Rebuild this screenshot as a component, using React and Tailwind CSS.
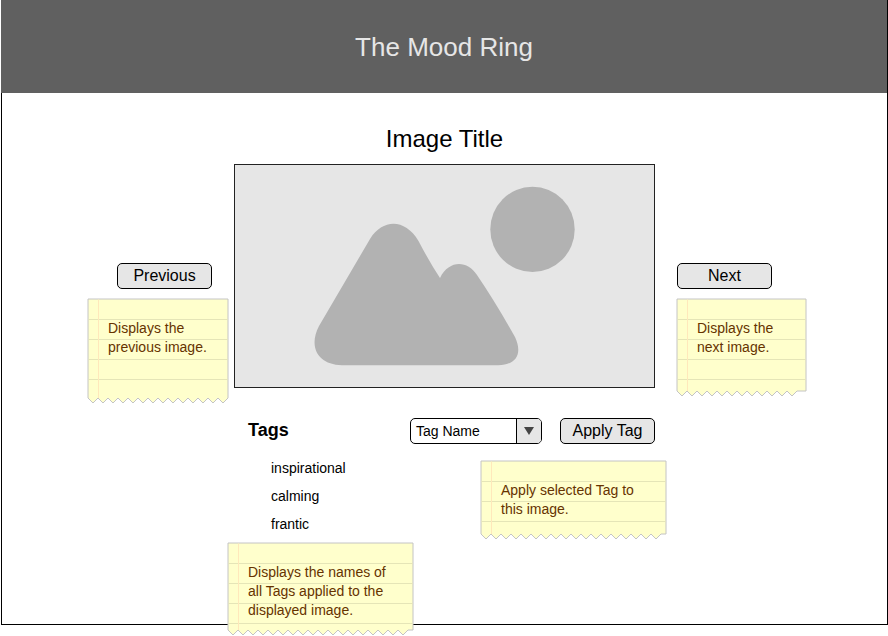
const TOOTH = 5;

// Ruled notepaper with a torn bottom edge.
function Note({ width, height, teeth, className = "", lines }) {
  let edge = `M1 1V${height}`;
  for (let i = 0; i < teeth; i++) {
    edge += `l${TOOTH} ${TOOTH}l${TOOTH} -${TOOTH}`;
  }
  edge += `H${width}V1Z`;
  const rules = [];
  for (let y = 21.5; y < height; y += 20) rules.push(y);
  return (
    <div className={`grid shrink-0 ${className}`}>
      <svg className="[grid-area:1/1]" width={width + 1} height={height + 6}>
        <path d={edge} fill="#ffffcc" stroke="#c4c4c4" />
        {rules.map((y) => (
          <path key={y} d={`M1.5 ${y}H${width - 0.5}`} stroke="#e5e5b7" />
        ))}
        <path d={`M11.5 1.5V${height}`} stroke="#ffe8bb" />
      </svg>
      <p className="[grid-area:1/1] pl-[21px] pt-[21px] text-[14px] leading-[19px] text-[#663300]">
        {lines.map((line) => (
          <span key={line} className="block whitespace-nowrap">{line}</span>
        ))}
      </p>
    </div>
  );
}

function Button({ children, className = "" }) {
  return (
    <button
      className={`flex h-[26px] w-[95px] shrink-0 items-center justify-center rounded-[5px] border border-black bg-[#e6e6e6] text-[16px] leading-none ${className}`}
    >
      {children}
    </button>
  );
}

function ImagePlaceholder() {
  return (
    <svg className="h-56 w-[421px] shrink-0 border border-[#222] bg-[#e6e6e6]" viewBox="235 165 419 222">
      <ellipse cx="532.5" cy="229.4" rx="42.2" ry="42.6" fill="#b2b2b2" />
      <path
        d="M370 239C383 218.500 405 218.500 418.500 241Q430 263 440 278C449 260 467 260 477 275Q496 303 515 337C523 354 516 365 498 365.200H342C318 365 308 347 319 326Z"
        fill="#b2b2b2"
      />
    </svg>
  );
}

export default function App() {
  return (
    <div className="h-[636px] w-[888px] overflow-hidden bg-white pl-px font-['Liberation_Sans',Arial,sans-serif] text-black">
      <div className="h-[625px] w-[887px] border-x border-b border-black">
        <header className="-ml-px flex h-[93px] w-[886px] items-center justify-center bg-[#606060] pt-[2px] text-[26px] text-[#e6e6e6]">
          The Mood Ring
        </header>
        <h1 className="mt-[31px] text-center text-[24px] leading-[30px]">Image Title</h1>
        <main className="mt-[10px] flex pl-[85px]">
          <div className="w-[147px] pt-[99px]">
            <Button className="ml-[30px]">Previous</Button>
            <Note className="mt-[9px]" width={141} height={100} teeth={14} lines={["Displays the", "previous image."]} />
          </div>
          <section className="w-[443px]">
            <ImagePlaceholder />
            <div className="flex pt-[30px]">
              <div className="w-[176px] pl-[14px]">
                <h2 className="text-[18px] font-bold leading-6">Tags</h2>
                <ul className="mt-3 pl-[23px] text-[14px] leading-7">
                  <li>inspirational</li>
                  <li>calming</li>
                  <li>frantic</li>
                </ul>
                <Note
                  className="-ml-[21px] mt-[4px]"
                  width={186}
                  height={88}
                  teeth={18}
                  lines={["Displays the names of", "all Tags applied to the", "displayed image."]}
                />
              </div>
              <div className="w-[260px]">
                <div className="flex gap-[18px]">
                  <div className="flex h-[26px] w-[132px] overflow-hidden rounded-[5px] border border-black text-[14px]">
                    <span className="flex flex-1 items-center pl-[5px]">Tag Name</span>
                    <span className="flex w-[25px] items-center justify-center border-l border-black bg-[#e6e6e6]">
                      <svg width="10" height="8">
                        <path d="M0 0H10L5 8Z" fill="#444" />
                      </svg>
                    </span>
                  </div>
                  <Button>Apply Tag</Button>
                </div>
                <Note
                  className="ml-[70px] mt-[16px]"
                  width={186}
                  height={74}
                  teeth={18}
                  lines={["Apply selected Tag to", "this image."]}
                />
              </div>
            </div>
          </section>
          <div className="w-[130px] pt-[99px]">
            <Button>Next</Button>
            <Note className="-ml-px mt-[9px]" width={130} height={93} teeth={12} lines={["Displays the", "next image."]} />
          </div>
        </main>
      </div>
    </div>
  );
}
